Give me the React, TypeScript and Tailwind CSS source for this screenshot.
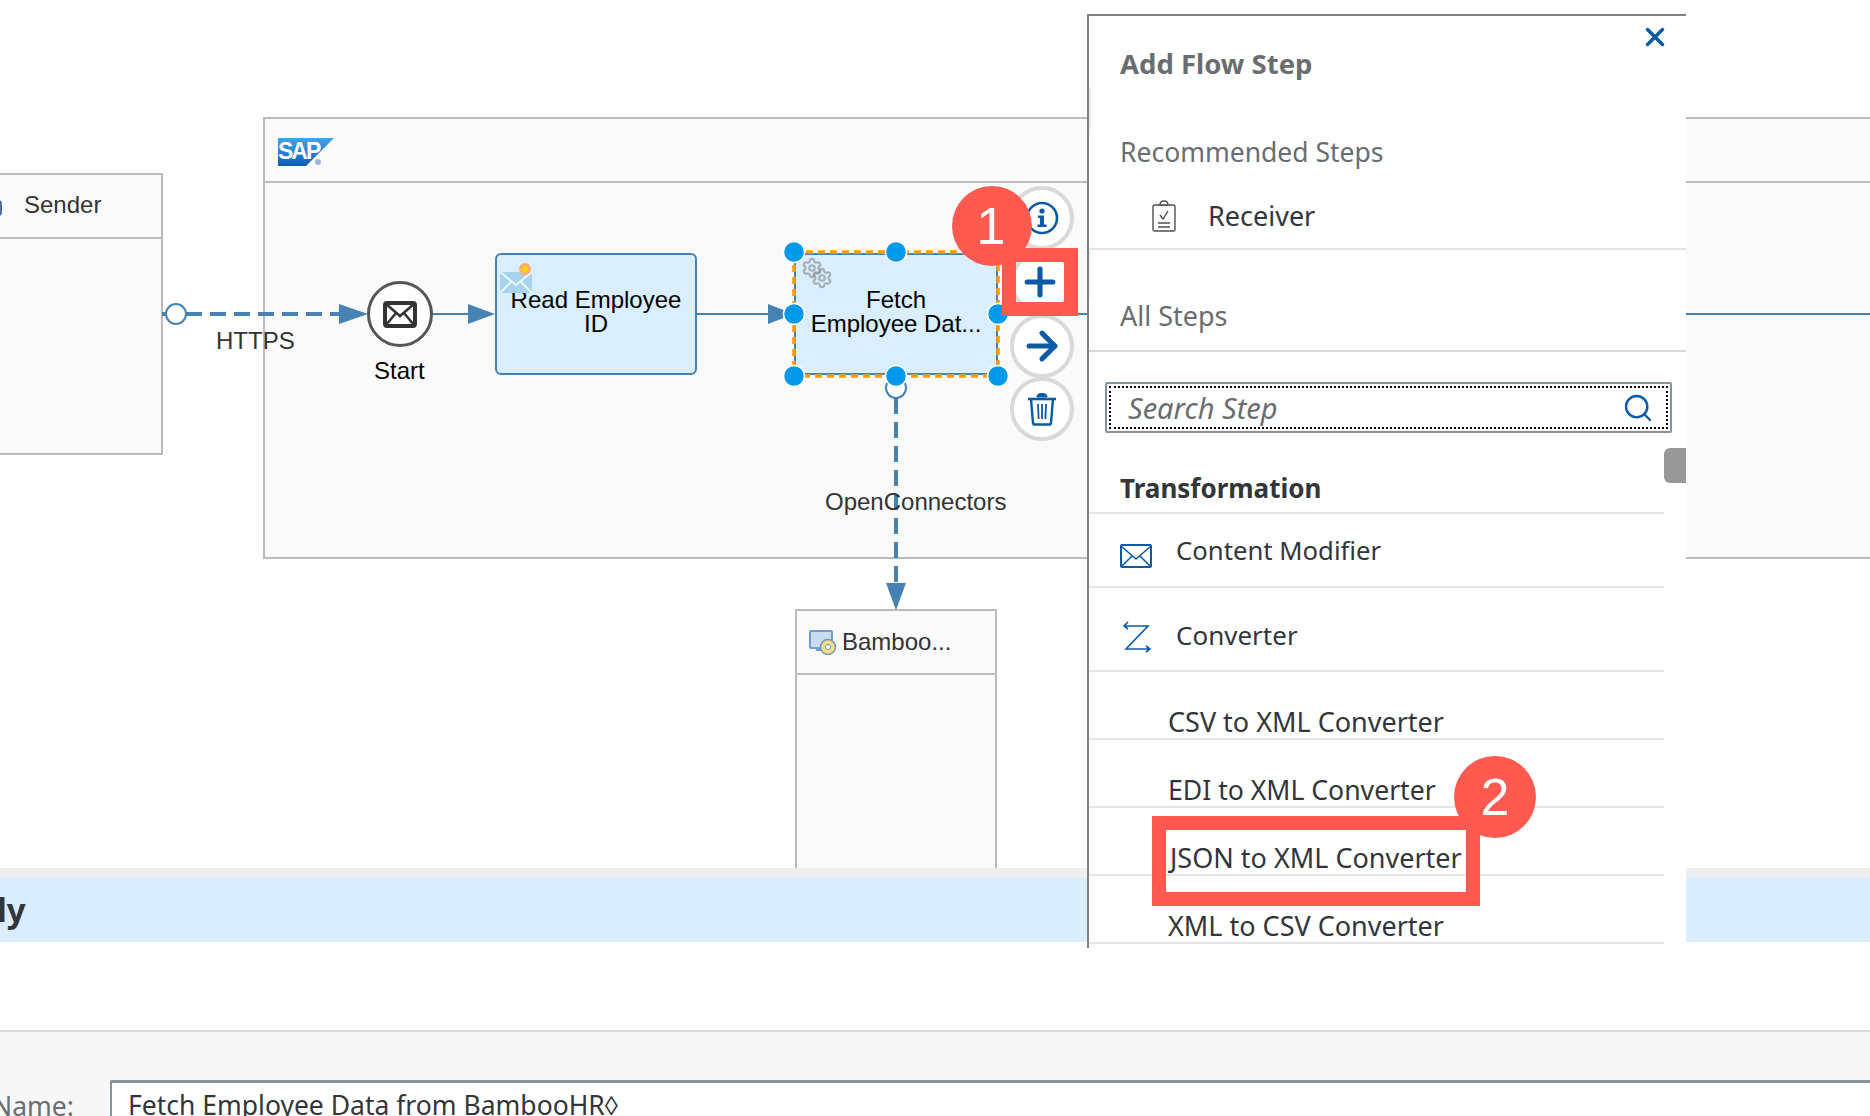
import React from 'react'
import { ArrowRight, Plus, Search, Settings, X } from 'lucide-react'

const BLUE = '#4682b4'

const Handle = ({ x, y }: { x: number; y: number }) => (
  <circle cx={x} cy={y} r={10.5} fill="#0199ea" stroke="#fff" strokeWidth={1.5} />
)

const Connectors = () => (
  <svg className="absolute left-0 top-0" width={1870} height={868}>
    <line x1={162} y1={314} x2={345} y2={314} stroke={BLUE} strokeWidth={4} strokeDasharray="16 8" />
    <circle cx={176} cy={314} r={10} fill="#fff" stroke={BLUE} strokeWidth={2} />
    <polygon points="339,304 339,324 368,314" fill={BLUE} />
    <line x1={432} y1={314} x2={470} y2={314} stroke={BLUE} strokeWidth={2} />
    <polygon points="468,304 468,324 495,314" fill={BLUE} />
    <line x1={696} y1={314} x2={770} y2={314} stroke={BLUE} strokeWidth={2} />
    <polygon points="768,304 768,324 794,314" fill={BLUE} />
    <line x1={998} y1={314} x2={1100} y2={314} stroke={BLUE} strokeWidth={2} />
    <line x1={1686} y1={314} x2={1870} y2={314} stroke={BLUE} strokeWidth={2} />
    <line x1={896} y1={398} x2={896} y2={590} stroke={BLUE} strokeWidth={4} strokeDasharray="16 8" />
    <polygon points="886,583 906,583 896,610" fill={BLUE} />
    <circle cx={896} cy={388} r={10} fill="#fff" stroke={BLUE} strokeWidth={2} />
  </svg>
)

const StartEvent = () => (
  <div className="absolute left-[367px] top-[281px] flex h-[66px] w-[66px] items-center justify-center rounded-full border-[3px] border-[#555] bg-white">
    <svg width="34" height="27" viewBox="0 0 34 27">
      <rect x="2" y="2" width="30" height="23" rx="2" fill="none" stroke="#333" strokeWidth="4" />
      <path d="M3 3 L17 15 L31 3 M3 24 L13 12 M31 24 L21 12" fill="none" stroke="#333" strokeWidth="2.5" />
    </svg>
  </div>
)

const SapLogo = () => (
  <svg className="absolute left-[278px] top-[138px]" width="56" height="28" viewBox="0 0 56 28">
    <defs>
      <linearGradient id="sapfill" x1="0" y1="0" x2="0" y2="1">
        <stop offset="0" stopColor="#3aa8ee" />
        <stop offset="1" stopColor="#0f5bb8" />
      </linearGradient>
    </defs>
    <polygon points="0,0 56,0 28,28 0,28" fill="url(#sapfill)" />
    <text x="0" y="21" fill="#fff" fontSize="23" fontWeight="700" fontFamily="Liberation Sans, sans-serif" letterSpacing="-2">SAP</text>
    <circle cx="40" cy="24" r="3" fill="#9db4dc" />
  </svg>
)

const MailIcon = () => (
  <svg className="absolute left-[3px] top-[8px]" width="32" height="30" viewBox="0 0 32 30">
    <rect x="0" y="9" width="32" height="21" fill="#a9d2ec" />
    <path d="M0 9 L16 22 L32 9 M0 30 L12 18 M32 30 L20 18" fill="none" stroke="#eaf6fd" strokeWidth="2" />
    <circle cx="25" cy="6" r="6" fill="#f8b26a" />
    <circle cx="25" cy="6" r="3" fill="#ffd400" />
  </svg>
)

const BambooIcon = () => (
  <svg width="28" height="25" viewBox="0 0 28 25">
    <rect x="1" y="1" width="22" height="17" rx="1" fill="#c9dcf0" stroke="#6f9bd0" strokeWidth="2" />
    <rect x="7" y="18" width="10" height="3" fill="#6f9bd0" />
    <circle cx="19" cy="17" r="7.5" fill="#e8e08a" stroke="#7d93b5" strokeWidth="1.5" />
    <circle cx="19" cy="17" r="2.5" fill="#fff" stroke="#7d93b5" />
  </svg>
)

const InfoIcon = () => (
  <svg width="34" height="34" viewBox="0 0 34 34">
    <circle cx="17" cy="17" r="15" fill="none" stroke="#0a5aa5" strokeWidth="2.6" />
    <circle cx="17" cy="10" r="2.6" fill="#0a5aa5" />
    <path d="M13 14.5 H19 V23.5 H21.5 V26 H12.5 V23.5 H15 V17 H13 Z" fill="#0a5aa5" />
  </svg>
)

const TrashIcon = () => (
  <svg width="30" height="34" viewBox="0 0 30 34" fill="none" stroke="#0a5aa5">
    <path d="M1 7 H29" strokeWidth="2.6" />
    <path d="M10 5 C10 2 12 1.5 15 1.5 C18 1.5 20 2 20 5 Z" fill="#0a5aa5" strokeWidth="1" />
    <path d="M4 7 L6 31 Q6.2 32.5 8 32.5 H22 Q23.8 32.5 24 31 L26 7" strokeWidth="2.4" />
    <path d="M11 12 L11.6 27 M15 12 V27 M19 12 L18.4 27" strokeWidth="1.8" />
  </svg>
)

const ActionButton = ({ top, children }: { top: string; children: React.ReactNode }) => (
  <div className={`absolute left-[1010px] ${top} flex h-[64px] w-[64px] items-center justify-center rounded-full border-[4px] border-[#d9d9d9] bg-white`}>
    {children}
  </div>
)

const Diagram = () => (
  <div className="relative h-[868px] overflow-hidden font-['Liberation_Sans',sans-serif] text-[24px] leading-[24px]">
    {/* sender lane */}
    <div className="absolute left-[-10px] top-[173px] h-[282px] w-[173px] border-2 border-[#bbb] bg-[#fafafa]">
      <div className="flex h-[64px] items-center border-b-2 border-[#bbb] pb-[2px] pl-[32px] text-[#333]">Sender</div>
    </div>
    <div className="absolute left-[-5px] top-[200px] h-[16px] w-[7px] rounded-full bg-[#4a6fa5]" />

    {/* integration process lane */}
    <div className="absolute left-[263px] top-[117px] h-[442px] w-[1640px] border-2 border-[#bbb] bg-[#fafafa]">
      <div className="h-[64px] border-b-2 border-[#bbb]" />
    </div>
    <SapLogo />

    {/* receiver */}
    <div className="absolute left-[795px] top-[609px] h-[270px] w-[202px] border-2 border-[#bbb] bg-[#fafafa]">
      <div className="flex h-[64px] items-center gap-[5px] border-b-2 border-[#bbb] pl-[12px] text-[#333]">
        <BambooIcon />
        <span>Bamboo...</span>
      </div>
    </div>

    <Connectors />

    <span className="absolute left-[216px] top-[329px] text-[#333]">HTTPS</span>
    <span className="absolute left-[374px] top-[359px] text-black">Start</span>
    <span className="absolute left-[825px] top-[490px] text-[#333]">OpenConnectors</span>
    <StartEvent />

    <div className="absolute left-[495px] top-[253px] h-[122px] w-[202px] rounded-[6px] border-2 border-[#4682b4] bg-[#d9eeff] pt-[33px] text-center text-black">
      <MailIcon />
      Read Employee
      <br />
      ID
    </div>

    <div className="absolute left-[794px] top-[253px] h-[122px] w-[204px] border-2 border-[#4682b4] bg-[#d9eeff] pt-[33px] text-center text-black">
      <Settings className="absolute left-[5px] top-[2px] opacity-60 blur-[0.5px]" size={22} strokeWidth={2.4} color="#888" />
      <Settings className="absolute left-[15px] top-[12px] opacity-60 blur-[0.5px]" size={22} strokeWidth={2.4} color="#888" />
      Fetch
      <br />
      Employee Dat...
    </div>
    <svg className="absolute left-0 top-0" width={1870} height={868}>
      <rect x={794} y={252} width={204} height={124} fill="none" stroke="#ff9c00" strokeWidth={3.5} strokeDasharray="7 5" />
      <Handle x={794} y={252} />
      <Handle x={896} y={252} />
      <Handle x={998} y={314} />
      <Handle x={794} y={314} />
      <Handle x={794} y={376} />
      <Handle x={896} y={376} />
      <Handle x={998} y={376} />
    </svg>

    <ActionButton top="top-[186px]"><InfoIcon /></ActionButton>
    <ActionButton top="top-[250px]"><Plus className="ml-[-5px]" size={44} strokeWidth={2.8} color="#0a5aa5" /></ActionButton>
    <ActionButton top="top-[314px]"><ArrowRight size={44} strokeWidth={2.8} color="#0a5aa5" /></ActionButton>
    <ActionButton top="top-[377px]"><TrashIcon /></ActionButton>
  </div>
)

const ClipboardIcon = () => (
  <svg width="24" height="32" viewBox="0 0 24 32" fill="none" stroke="#4a4f55" strokeWidth="1.4">
    <rect x="1" y="5" width="22" height="26" rx="1.5" />
    <path d="M8 5 C8 3 9 1 12 1 C15 1 16 3 16 5 Z" fill="#fff" />
    <path d="M8 15 L11 19 L16 11 M6 23 H18 M6 27 H18" />
  </svg>
)

const EnvelopeIcon = () => (
  <svg width="32" height="24" viewBox="0 0 32 24" fill="none" stroke="#0a5aa5" strokeWidth="1.5">
    <rect x="1" y="1" width="30" height="22" rx="1" strokeWidth="2" />
    <path d="M1 2 L16 15 L31 2 M2 22 L12 12 M30 22 L20 12" />
  </svg>
)

const ConverterIcon = () => (
  <svg width="30" height="32" viewBox="0 0 30 32" fill="none" stroke="#0a5aa5" strokeWidth="1.6">
    <path d="M6 1 L2 5 L6 8 M2 5 H26 L4 28 H28 M24 25 L28 28 L24 31" />
  </svg>
)

const Panel = () => (
  <div className="absolute left-[1087px] top-[14px] flex h-[934px] w-[599px] flex-col overflow-hidden border-l-2 border-t-2 border-[#808080] bg-white font-['Noto_Sans',sans-serif] leading-[32px]">
    <X className="absolute right-[16px] top-[6px]" size={30} strokeWidth={2.8} color="#0a5aa5" />
    <div className="flex h-[94px] shrink-0 items-center pl-[31px] pt-[2px] text-[27.5px] font-bold text-[#6a6d70]">Add Flow Step</div>
    <div className="flex h-[84px] shrink-0 items-center pl-[31px] text-[26.5px] text-[#6a6d70]">Recommended Steps</div>
    <div className="flex h-[56px] shrink-0 items-center border-b-2 border-[#e5e5e5] pb-[10px] pl-[63px] text-[27px] text-[#32363a]">
      <ClipboardIcon />
      <span className="ml-[32px]">Receiver</span>
    </div>
    <div className="flex h-[102px] shrink-0 items-end border-b-2 border-[#d9d9d9] pb-[18px] pl-[31px] text-[27px] text-[#6a6d70]">All Steps</div>
    <div className="ml-[16px] mt-[30px] h-[51px] w-[567px] shrink-0 rounded-[2px] border-2 border-[#89919a] p-[2px]">
      <div className="flex h-full items-center justify-between border-2 border-dotted border-black pl-[17px] pr-[12px] text-[29px] italic text-[#6a6d70]">
        <span>Search Step</span>
        <Search size={32} strokeWidth={1.8} color="#0a5aa5" />
      </div>
    </div>
    <div className="absolute right-0 top-[432px] h-[35px] w-[22px] rounded-l-[6px] bg-[#999]" />
    <div className="flex w-[575px] flex-col text-[26px] text-[#32363a]">
      <div className="flex h-[81px] items-end border-b-2 border-[#e5e5e5] pb-[8px] pl-[31px] font-bold">Transformation</div>
      <div className="relative flex h-[74px] items-start border-b-2 border-[#e5e5e5] pl-[87px] pt-[21px] text-[25.7px]">
        <span className="absolute left-[31px] top-[30px]"><EnvelopeIcon /></span>
        Content Modifier
      </div>
      <div className="relative flex h-[84px] items-start border-b-2 border-[#e5e5e5] pl-[87px] pt-[31px]">
        <span className="absolute left-[33px] top-[33px]"><ConverterIcon /></span>
        Converter
      </div>
      <div className="flex h-[68px] items-end border-b-2 border-[#e5e5e5] pl-[79px] text-[27px]">CSV to XML Converter</div>
      <div className="flex h-[68px] items-end border-b-2 border-[#e5e5e5] pl-[79px] text-[26.6px]">EDI to XML Converter</div>
      <div className="flex h-[68px] items-end border-b-2 border-[#e5e5e5] pl-[81px] text-[27px]">JSON to XML Converter</div>
      <div className="flex h-[68px] items-end border-b-2 border-[#e5e5e5] pl-[79px] text-[27px]">XML to CSV Converter</div>
    </div>
  </div>
)

const Annotations = () => (
  <>
    <div className="absolute left-[1089px] top-[88px] h-[47px] w-[2px] bg-[#f0f0f0]" />
    <div className="absolute left-[1089px] top-[252px] h-[46px] w-[2px] bg-[#f4f4f4]" />
    <div className="absolute left-[952px] top-[186px] flex h-[80px] w-[80px] items-center justify-center rounded-full bg-[#ff5a4f] pr-[2px] font-['Liberation_Sans',sans-serif] text-[52px] text-white">1</div>
    <div className="absolute left-[1002px] top-[248px] h-[68px] w-[76px] border-[14px] border-[#ff5a4f]" />
    <div className="absolute left-[1454px] top-[756px] flex h-[82px] w-[82px] items-center justify-center rounded-full bg-[#ff5a4f] font-['Liberation_Sans',sans-serif] text-[52px] text-white">2</div>
    <div className="absolute left-[1152px] top-[816px] h-[90px] w-[328px] border-[14px] border-[#ff5a4f]" />
  </>
)

const App = () => {
  return (
    <div className="relative flex h-[1116px] w-[1870px] flex-col overflow-hidden bg-white font-['Noto_Sans',sans-serif]">
      <Diagram />
      <div className="h-[10px] shrink-0 bg-[#eeeff0]" />
      <div className="flex h-[64px] shrink-0 items-center overflow-hidden bg-[#d9edff] text-[33px] font-bold text-[#32363a]">
        <span className="ml-[-3px]">ly</span>
      </div>
      <div className="h-[88px] shrink-0" />
      <div className="flex flex-1 items-start overflow-hidden border-t-2 border-[#d9d9d9] bg-[#f7f7f7] pt-[48px] text-[26.5px] text-[#32363a]">
        <span className="ml-[-8px] mt-[10px] w-[118px] shrink-0 leading-[32px] text-[#6a6d70]">Name:</span>
        <div className="h-[60px] flex-1 rounded-tl-[2px] border-l-2 border-t-[3px] border-[#89919a] bg-white pl-[16px] pt-[6px] leading-[32px]">Fetch Employee Data from BambooHR◊</div>
      </div>
      <Panel />
      <Annotations />
    </div>
  )
}

export default App
